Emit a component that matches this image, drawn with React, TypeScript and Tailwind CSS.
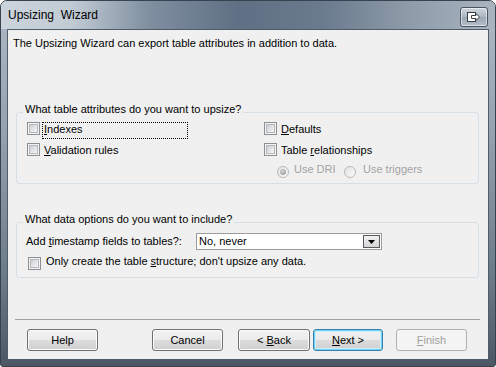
import React from "react"

function Check() {
  return (
    <span className="flex h-[13px] w-[13px] shrink-0 border border-[#8e8f8f] bg-[#f4f4f4] p-[1px]">
      <span className="h-full w-full border border-[#b4b8bd] bg-[linear-gradient(135deg,#cbcfd4,#f7f7f7)]" />
    </span>
  )
}

function Radio({ on }: { on?: boolean }) {
  return (
    <span className="flex h-[12px] w-[12px] shrink-0 items-center justify-center rounded-full border border-[#b9b9b9] bg-[linear-gradient(135deg,#e2e2e2,#fbfbfb)]">
      {on && <span className="h-[6px] w-[6px] rounded-full bg-[radial-gradient(circle_at_40%_35%,#d6d6d6,#8c8c8c)]" />}
    </span>
  )
}

function CheckRow({ children, focus, h }: { children: React.ReactNode; focus?: boolean; h: string }) {
  return (
    <div className={`flex items-start ${h}`}>
      <Check />
      <span
        className={
          focus
            ? "ml-[2px] h-[17px] w-[146px] border border-dotted border-black px-[1px] leading-[13px]"
            : "ml-[2px] h-[17px] border border-transparent px-[1px] leading-[13px]"
        }
      >
        {children}
      </span>
    </div>
  )
}

function Btn({ children, kind, ml, w }: { children: React.ReactNode; kind?: "focus" | "off"; ml: string; w: string }) {
  const base = "flex h-[22px] items-center justify-center whitespace-pre rounded-[3px] border leading-[13px]"
  if (kind === "off")
    return <div className={`${base} ${ml} ${w} border-[#adb2b5] bg-[#f4f4f4] text-[#a0a0a0]`}>{children}</div>
  if (kind === "focus")
    return (
      <div className={`${base} ${ml} ${w} border-[#3c7fb1] bg-[linear-gradient(#f2f2f2_0%,#ebebeb_50%,#dddddd_50%,#cfcfcf_100%)] shadow-[inset_0_0_0_1px_#6fd3f6,inset_0_0_0_2px_#c9eefb]`}>
        {children}
      </div>
    )
  return (
    <div className={`${base} ${ml} ${w} border-[#707070] bg-[linear-gradient(#f2f2f2_0%,#ebebeb_50%,#dddddd_50%,#cfcfcf_100%)] shadow-[inset_0_0_0_1px_#fbfbfb]`}>
      {children}
    </div>
  )
}

export default function App() {
  return (
    <div className="h-[367px] w-[496px] bg-white">
      <div className="flex h-full w-full flex-col rounded-t-[7px] rounded-b-[3px] border border-[#38434f] bg-[linear-gradient(180deg,#aeb9c4_0%,#95a3b1_35%,#6c7b8a_75%,#4b5764_100%)] font-['Liberation_Sans',Arial,sans-serif] text-[11px] text-black">
        {/* title bar */}
        <div className="flex h-[28px] shrink-0 rounded-t-[6px] bg-[linear-gradient(90deg,#cbd3dc_0%,#c2ccd5_14%,#7f8fa0_30%,#5f7084_48%,#6a7b8e_65%,#8d9aa8_82%,#a9b4bf_100%)] pl-[7px] pr-[7px]">
          <span className="mt-[7px] whitespace-pre text-[12px] leading-[14px] text-black">Upsizing  Wizard</span>
          <div className="ml-auto mt-[6px] flex h-[20px] w-[28px] items-center justify-center rounded-[3px] border border-[#4a5563] bg-[linear-gradient(#cfd7df,#aab5c1_50%,#9aa6b3_51%,#b4bec9)] shadow-[inset_0_0_0_1px_rgba(255,255,255,0.55)]">
            <svg width="14" height="10" viewBox="0 0 14 10">
              <rect x="0.5" y="0.5" width="8" height="9" fill="#fff" stroke="#3a3f46" />
              <path d="M4.5 3.5H9V1.5L12.5 5L9 8.5V6.5H4.5Z" fill="#fff" stroke="#3a3f46" strokeLinejoin="miter" />
            </svg>
          </div>
        </div>

        {/* client area */}
        <div className="mx-[6px] flex h-[331px] flex-col border border-[#4f5b68] bg-[#f0f0f0]">
          <div className="pl-[5px] pt-[6px] leading-[14px]">
            The Upsizing Wizard can export table attributes in addition to data.
          </div>

          <fieldset className="ml-[8px] mr-[9px] mt-[52px] rounded-[3px] border border-[#d5dfe5]">
            <legend className="ml-[6px] px-[2px] pb-[6px] leading-[14px]">What table attributes do you want to upsize?</legend>
            <div className="flex pl-[10px]">
              <div className="flex w-[237px] flex-col">
                <CheckRow focus h="h-[21px]">
                  <u>I</u>ndexes
                </CheckRow>
                <CheckRow h="h-[20px]">
                  <u>V</u>alidation rules
                </CheckRow>
              </div>
              <div className="flex flex-col">
                <CheckRow h="h-[21px]">
                  <u>D</u>efaults
                </CheckRow>
                <CheckRow h="h-[20px]">
                  Table <u>r</u>elationships
                </CheckRow>
                <div className="flex h-[20px] items-start pl-[13px] text-[#a3a3a3]">
                  <div className="flex w-[67px] items-start">
                    <span className="mt-[3px]">
                      <Radio on />
                    </span>
                    <span className="ml-[5px] leading-[13px]">Use DRI</span>
                  </div>
                  <span className="mt-[3px]">
                    <Radio />
                  </span>
                  <span className="ml-[7px] leading-[13px]">Use triggers</span>
                </div>
              </div>
            </div>
          </fieldset>

          <fieldset className="ml-[8px] mr-[9px] mt-[28px] rounded-[3px] border border-[#d5dfe5]">
            <legend className="ml-[6px] px-[2px] pb-[6px] leading-[14px]">What data options do you want to include?</legend>
            <div className="mt-[1px] flex h-[17px] items-center pl-[9px]">
              <span className="w-[170px] leading-[13px]">
                Add <u>t</u>imestamp fields to tables?:
              </span>
              <div className="flex h-[17px] w-[186px] items-center border border-[#9c9c9c] bg-white pl-[2px] pr-[1px]">
                <span className="leading-[13px]">No, never</span>
                <div className="ml-auto flex h-[13px] w-[17px] items-center justify-center border border-[#555a60] bg-[linear-gradient(#f2f2f2,#d4d4d4)]">
                  <svg width="7" height="4" viewBox="0 0 7 4">
                    <path d="M0 0H7L3.5 4Z" fill="#000" />
                  </svg>
                </div>
              </div>
            </div>
            <div className="mt-[5px] flex h-[22px] items-start pl-[11px]">
              <span className="mt-[2px]">
                <Check />
              </span>
              <span className="ml-[5px] leading-[13px]">
                Only create the table <u>s</u>tructure; don't upsize any data.
              </span>
            </div>
          </fieldset>

          <div className="ml-[7px] mr-[8px] mt-[41px] h-px bg-[#a0a0a0]" />

          <div className="mt-[9px] flex pl-[19px]">
            <Btn ml="ml-0" w="w-[71px]">Help</Btn>
            <Btn ml="ml-[54px]" w="w-[71px]">Cancel</Btn>
            <Btn ml="ml-[15px]" w="w-[72px]">
              {"< "}
              <u>B</u>ack
            </Btn>
            <Btn kind="focus" ml="ml-[3px]" w="w-[70px]">
              <u>N</u>
              {"ext >"}
            </Btn>
            <Btn kind="off" ml="ml-[13px]" w="w-[71px]">
              <u>F</u>inish
            </Btn>
          </div>
        </div>
      </div>
    </div>
  )
}
